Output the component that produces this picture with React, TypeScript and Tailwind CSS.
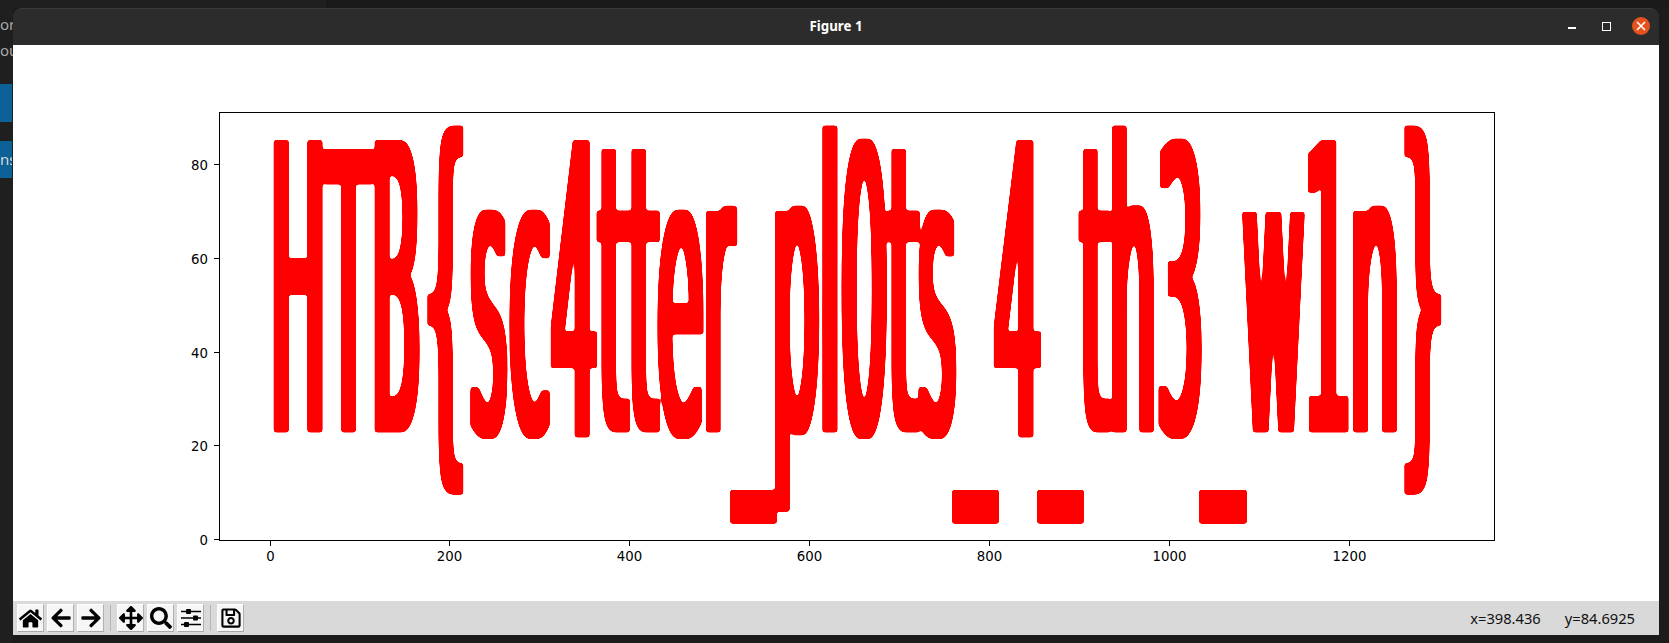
import { useMemo } from "react";
import { FaArrowLeft, FaArrowRight, FaArrowsAlt, FaHome, FaRegSave, FaSearch } from "react-icons/fa";
import { IconType } from "react-icons";

const plotFont = "'DejaVu Sans', sans-serif";

// scatter points read as big stretched characters: [char, left, right, top, bottom]
const points: [string, number, number, number, number][] = [
    ["H", 273, 323, 140, 432],
    ["T", 323, 374, 145, 432],
    ["B", 374, 420, 140, 432],
    ["{", 427, 464, 126, 497],
    ["s", 470, 508, 206, 437],
    ["c", 509, 550, 206, 437],
    ["4", 550, 598, 140, 437],
    ["t", 596, 630, 150, 432],
    ["t", 626, 660, 150, 432],
    ["e", 657, 704, 206, 437],
    ["r", 706, 738, 206, 432],
    ["_", 730, 777, 492, 525],
    ["p", 775, 820, 206, 512],
    ["l", 822, 838, 126, 432],
    ["0", 841, 887, 136, 437],
    ["t", 886, 920, 150, 432],
    ["s", 918, 957, 206, 437],
    ["_", 952, 999, 492, 525],
    ["4", 993, 1042, 140, 437],
    ["_", 1037, 1084, 492, 525],
    ["t", 1078, 1111, 150, 432],
    ["h", 1112, 1154, 126, 432],
    ["3", 1158, 1202, 136, 437],
    ["_", 1199, 1247, 492, 525],
    ["w", 1242, 1305, 211, 432],
    ["1", 1307, 1349, 140, 432],
    ["n", 1353, 1397, 206, 432],
    ["}", 1404, 1442, 126, 497],
];

const xTicks = [[270, "0"], [449, "200"], [629, "400"], [809, "600"], [989, "800"], [1169, "1000"], [1349, "1200"]] as const;
const yTicks = [[164, "80"], [258, "60"], [352, "40"], [445, "20"], [539, "0"]] as const;

// how far the thick marker fattens the strokes, sideways and up/down
const rx = 4;
const ry = 1.5;

function ScatterText() {
    const glyphs = useMemo(() => {
        const ctx = document.createElement("canvas").getContext("2d")!;
        ctx.font = `100px ${plotFont}`;
        return points.map(([ch, x0, x1, y0, y1]) => {
            const m = ctx.measureText(ch);
            const sx = (x1 - x0 - rx * 2) / (m.actualBoundingBoxLeft + m.actualBoundingBoxRight);
            const sy = (y1 - y0 - ry * 2) / (m.actualBoundingBoxAscent + m.actualBoundingBoxDescent);
            return {
                ch,
                tx: x0 + rx + m.actualBoundingBoxLeft * sx,
                ty: y0 + ry + m.actualBoundingBoxAscent * sy,
                sx,
                sy,
            };
        });
    }, []);

    return (
        <>
            <defs>
                <filter id="marker" filterUnits="userSpaceOnUse" x={13} y={45} width={1646} height={556} colorInterpolationFilters="sRGB">
                    <feMorphology operator="dilate" radius={`${rx} ${ry}`} />
                    <feGaussianBlur stdDeviation={1.6} />
                    <feComponentTransfer>
                        <feFuncA type="linear" slope={8} intercept={-3.5} />
                    </feComponentTransfer>
                </filter>
            </defs>
            <g fill="#ff0000" fontFamily={plotFont} fontSize={100} filter="url(#marker)">
                {glyphs.map((g, i) => (
                    <text key={i} transform={`translate(${g.tx} ${g.ty}) scale(${g.sx} ${g.sy})`}>
                        {g.ch}
                    </text>
                ))}
            </g>
        </>
    );
}

function Plot() {
    return (
        <svg viewBox="13 45 1646 556" className="block w-full h-full">
            <ScatterText />
            <rect x={219.5} y={112.5} width={1275} height={428} fill="none" stroke="#000" />
            <g fontFamily={plotFont} fontSize={13.3} fill="#000">
                {xTicks.map(([x, label]) => (
                    <g key={label}>
                        <line x1={x + 0.5} x2={x + 0.5} y1={541} y2={546} stroke="#000" />
                        <text x={x + 0.5} y={561} textAnchor="middle">{label}</text>
                    </g>
                ))}
                {yTicks.map(([y, label]) => (
                    <g key={label}>
                        <line x1={214} x2={219} y1={y + 0.5} y2={y + 0.5} stroke="#000" />
                        <text x={208} y={y + 5.5} textAnchor="end">{label}</text>
                    </g>
                ))}
            </g>
        </svg>
    );
}

function SlidersIcon() {
    return (
        <svg viewBox="0 0 22 22" className="w-[22px] h-[22px]">
            <path d="M1 4.5H21M1 11H21M1 17.5H21" stroke="#000" strokeWidth={1.6} />
            <rect x={6} y={2} width={5} height={5} rx={1} />
            <rect x={13} y={8.5} width={5} height={5} rx={1} />
            <rect x={4} y={15} width={5} height={5} rx={1} />
        </svg>
    );
}

function ToolButton({ icon: Icon, size = 21 }: { icon: IconType; size?: number }) {
    return (
        <button className="w-[27px] h-[28px] flex items-center justify-center bg-[#f6f6f6] border border-t-white border-l-white border-r-[#b0b0b0] border-b-[#a8a8a8]">
            <Icon size={size} color="#000" />
        </button>
    );
}

function Separator() {
    return <div className="w-px h-[26px] bg-[#b4b4b4] mx-[6px]" />;
}

function FigureWindow() {
    return (
        <div className="absolute left-[13px] top-[8px] w-[1646px] h-[627px] flex flex-col">
            <div className="h-[37px] shrink-0 relative flex items-center justify-center rounded-t-[9px] bg-[#2c2c2c] border-t border-[#3a3a3a]">
                <span className="text-white text-[13.3px] font-bold font-['Noto_Sans',sans-serif]">Figure 1</span>
                <div className="absolute right-[9px] top-[8px] flex items-center">
                    <div className="w-[8px] h-[2px] bg-white mt-[4px]" />
                    <div className="w-[9px] h-[9px] border border-white ml-[26px]" />
                    <div className="w-[18px] h-[18px] rounded-full bg-[#e5521d] ml-[21px] flex items-center justify-center">
                        <svg viewBox="0 0 10 10" className="w-[10px] h-[10px]">
                            <path d="M1 1L9 9M9 1L1 9" stroke="#fff" strokeWidth={1.6} />
                        </svg>
                    </div>
                </div>
            </div>
            <div className="h-[556px] shrink-0 bg-white">
                <Plot />
            </div>
            <div className="flex-1 flex items-center bg-[#d9d9d9] pl-[4px] pr-[24px] text-[14.7px] text-[#111] font-['Noto_Sans',sans-serif]">
                <div className="flex items-center gap-[3px]">
                    <ToolButton icon={FaHome} size={23} />
                    <ToolButton icon={FaArrowLeft} size={22} />
                    <ToolButton icon={FaArrowRight} size={22} />
                </div>
                <Separator />
                <div className="flex items-center gap-[3px]">
                    <ToolButton icon={FaArrowsAlt} size={24} />
                    <ToolButton icon={FaSearch} size={22} />
                    <button className="w-[27px] h-[28px] flex items-center justify-center bg-[#f6f6f6] border border-t-white border-l-white border-r-[#b0b0b0] border-b-[#a8a8a8]">
                        <SlidersIcon />
                    </button>
                </div>
                <Separator />
                <ToolButton icon={FaRegSave} size={22} />
                <div className="ml-auto flex gap-[24px]">
                    <span>x=398.436</span>
                    <span>y=84.6925</span>
                </div>
            </div>
        </div>
    );
}

export default function App() {
    return (
        <div className="relative w-[1669px] h-[643px] overflow-hidden bg-[#1b1b1b] font-['Noto_Sans',sans-serif]">
            {/* editor behind the figure window */}
            <div className="flex h-[8px]">
                <div className="w-[326px] bg-[#1f1f1f]" />
                <div className="flex-1 bg-[#191919] overflow-hidden pl-[53px]">
                    <div className="-mt-[17px] text-[15px] leading-[20px] text-[#9a9a9a]">2</div>
                </div>
            </div>
            <div className="w-[13px] h-[635px] overflow-hidden bg-[#1f1f1f] flex flex-col whitespace-nowrap text-[15px] text-[#a8a8a8]">
                <div className="mt-[3px] leading-[26px]">or</div>
                <div className="leading-[26px]">ou</div>
                <div className="mt-[21px] h-[38px] bg-[#0c6196] w-[12px]" />
                <div className="mt-[19px] h-[37px] w-[12px] overflow-hidden bg-[#0c6196] text-[#d8d8d8] leading-[37px]">ns</div>
            </div>
            <FigureWindow />
        </div>
    );
}
